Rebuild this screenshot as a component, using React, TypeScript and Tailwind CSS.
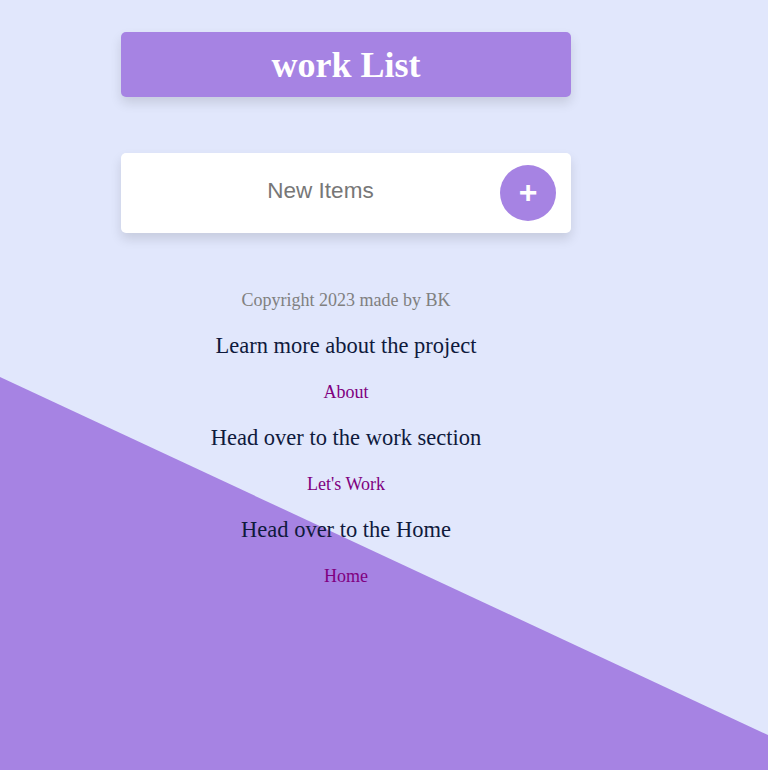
import React, { useState } from 'react';

const links = [
  { text: 'Learn more about the project', label: 'About' },
  { text: 'Head over to the work section', label: "Let's Work" },
  { text: 'Head over to the Home', label: 'Home' },
];

export default function App() {
  const [item, setItem] = useState('');

  return (
    <div className="relative min-h-screen overflow-hidden bg-[#e1e7fc] font-['Liberation_Serif',serif]">
      {/* diagonal background */}
      <svg
        className="absolute inset-0 h-full w-full"
        viewBox="0 0 768 770"
        preserveAspectRatio="none"
      >
        <polygon points="0,377 768,735 768,770 0,770" fill="#a683e3" />
      </svg>

      <div className="relative ml-[121px] w-[450px] pt-[32px]">
        <div className="flex h-[65px] items-center justify-center rounded-[5px] bg-[#a683e3] shadow-[0_6px_12px_rgba(0,0,0,0.12)]">
          <h1 className="text-[36px] font-bold text-white">work List</h1>
        </div>

        <form
          className="mt-[56px] flex h-[80px] items-center rounded-[5px] bg-white pr-[15px] shadow-[0_6px_12px_rgba(0,0,0,0.12)]"
          onSubmit={(e) => {
            e.preventDefault();
            setItem('');
          }}
        >
          <input
            value={item}
            onChange={(e) => setItem(e.target.value)}
            placeholder="New Items"
            className="min-w-0 flex-1 bg-transparent pb-[4px] pl-[20px] text-center font-['Liberation_Sans',sans-serif] text-[22.5px] text-[#555] outline-none placeholder:text-[#777]"
          />
          <button
            type="submit"
            className="flex h-[56px] w-[56px] items-center justify-center rounded-full bg-[#a683e3] pb-[3px] font-['Liberation_Sans',sans-serif] text-[32px] font-bold leading-none text-white"
          >
            +
          </button>
        </form>

        <footer className="mt-[44px] flex flex-col items-center">
          <p className="text-[18px] leading-[46px] text-[#808080]">Copyright 2023 made by BK</p>
          {links.map((l) => (
            <React.Fragment key={l.label}>
              <p className="text-[22.5px] leading-[46px] text-[#0f1a3c]">{l.text}</p>
              <a href="#" className="text-[18px] leading-[46px] text-[#800080]">
                {l.label}
              </a>
            </React.Fragment>
          ))}
        </footer>
      </div>
    </div>
  );
}
